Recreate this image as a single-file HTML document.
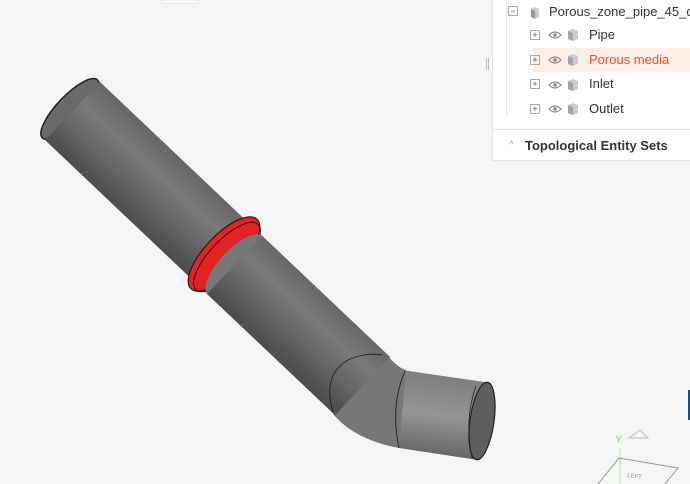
<!DOCTYPE html>
<html><head><style>
html,body{margin:0;padding:0;}
body{width:690px;height:484px;background:#f5f5f5;position:relative;overflow:hidden;font-family:"Liberation Sans",sans-serif;}
.panel{position:absolute;left:492px;top:0;width:198px;height:160px;background:#fff;border-left:1px solid #e4e4e4;border-bottom:1px solid #e4e4e4;}
.row{position:absolute;left:0;height:24px;line-height:24px;font-size:13px;color:#333;width:198px;}
.pm{position:absolute;width:8px;height:8px;border:1px solid #aaa;font-size:9px;line-height:8px;text-align:center;color:#555;top:7px;}
</style></head><body>
<svg width="690" height="484" style="position:absolute;left:0;top:0">
<defs>
<linearGradient id="g1" gradientUnits="userSpaceOnUse" x1="99" y1="82" x2="45" y2="140">
<stop offset="0" stop-color="#666"/><stop offset="0.35" stop-color="#7a7a7a"/><stop offset="1" stop-color="#4e4e4e"/></linearGradient>
<linearGradient id="g2" gradientUnits="userSpaceOnUse" x1="440" y1="375" x2="430" y2="455">
<stop offset="0" stop-color="#7e7e7e"/><stop offset="0.5" stop-color="#959595"/><stop offset="1" stop-color="#666"/></linearGradient>
</defs>
<rect x="162" y="0" width="36" height="3" fill="#fff" stroke="#cde" stroke-width="0.6"/>
<path d="M402,370 L491,383 L478,460 L399,448 Z" fill="url(#g2)"/>
<path d="M388,356 Q398,368 406,370 L399,448 Q355,440 333,414 Z" fill="#777"/>
<ellipse cx="70" cy="109" rx="13" ry="40" transform="rotate(43.5 70 109)" fill="#6a6a6a" stroke="#222" stroke-width="1.5"/>
<path d="M100,82 L390,357 L335,415 L45,140 Z" fill="url(#g1)"/>
<ellipse cx="224" cy="254" rx="19" ry="48" transform="rotate(43.5 224 254)" fill="#e52222" stroke="#111" stroke-width="1"/>
<ellipse cx="227" cy="257" rx="17" ry="45" transform="rotate(43.5 227 257)" fill="none" stroke="#111" stroke-width="0.9"/>
<ellipse cx="235" cy="265" rx="15" ry="40" transform="rotate(43.5 235 265)" fill="#777"/>
<path d="M262,236 L390,357 L335,415 L207,294 Z" fill="url(#g1)"/>
<path d="M333,412 Q322,375 348,360 Q365,352 382,355" fill="none" stroke="#222" stroke-width="0.9"/>
<path d="M405,371 Q390,405 399,448" fill="none" stroke="#222" stroke-width="0.9"/>
<ellipse cx="482" cy="421" rx="12" ry="39" transform="rotate(8 482 421)" fill="#5e5e5e" stroke="#222" stroke-width="1.2"/>
<path d="M476,386 Q464,420 472,458" fill="none" stroke="#222" stroke-width="0.8"/>
<rect x="486" y="58" width="1" height="12" fill="#bbb"/><rect x="488" y="58" width="1" height="12" fill="#bbb"/>
<rect x="688" y="390" width="2" height="30" fill="#1d4f7a"/>
<text x="615" y="443" font-size="11" fill="#7ad67a" font-family="Liberation Sans">Y</text>
<path d="M629,438 L640,430 L648,438 Z" fill="none" stroke="#bbb"/>
<line x1="620" y1="448" x2="620" y2="484" stroke="#bfe8bf" stroke-width="1.5"/>
<path d="M598,484 L619,458 L678,468 L665,484" fill="none" stroke="#999" stroke-width="1"/>
<text x="627" y="477" font-size="6" fill="#999" transform="rotate(8 627 477)">LEFT</text>
</svg>
<div class="panel">
<div style="position:absolute;left:13px;top:0;width:1px;height:115px;background:#e8e8e8"></div>
<div class="row" style="top:0"><span class="pm" style="left:15px;top:6px">−</span><svg style="position:absolute;left:36px;top:6px" width="12" height="13"><path d="M2,3 L6,1 L10,3 L10,11 L6,13 L2,11 Z" fill="#ccc"/><path d="M2,3 L6,5 L6,13 L2,11 Z" fill="#999"/></svg><span style="position:absolute;left:56px">Porous_zone_pipe_45_deg</span></div>
<div class="row" style="top:23px"><span class="pm" style="left:37px">+</span><span style="position:absolute;left:96px">Pipe</span></div>
<div class="row" style="top:48px;background:#fdeee6;left:40px;width:158px"><span style="position:absolute;left:56px;color:#e8531c">Porous media</span></div>
<div class="row" style="top:48px;background:transparent"><span class="pm" style="left:37px">+</span></div>
<div class="row" style="top:72px"><span class="pm" style="left:37px">+</span><span style="position:absolute;left:96px">Inlet</span></div>
<div class="row" style="top:97px"><span class="pm" style="left:37px">+</span><span style="position:absolute;left:96px">Outlet</span></div>
<div style="position:absolute;left:0;top:129px;width:198px;height:1px;background:#e4e4e4"></div>
<div class="row" style="top:134px"><span style="position:absolute;left:16px;color:#aaa;font-size:10px">^</span><span style="position:absolute;left:32px;font-weight:bold;color:#333">Topological Entity Sets</span></div>
</div>
<svg width="690" height="484" style="position:absolute;left:0;top:0;pointer-events:none">
<defs>
<g id="eye"><path d="M0,4 Q6,-2 12,4 Q6,10 0,4 Z" fill="none" stroke="#888" stroke-width="1.2"/><circle cx="6" cy="4" r="1.8" fill="#888"/></g>
<g id="cube"><path d="M0,2 L5,0 L10,2 L10,10 L5,12 L0,10 Z" fill="#ccc"/><path d="M0,2 L5,4 L5,12 L0,10 Z" fill="#a5a5a5"/></g>
</defs>
<g transform="translate(549,31)"><use href="#eye"/></g><g transform="translate(568,29)"><use href="#cube"/></g>
<g transform="translate(549,56)"><use href="#eye"/></g><g transform="translate(568,54)"><use href="#cube"/></g>
<g transform="translate(549,81)"><use href="#eye"/></g><g transform="translate(568,79)"><use href="#cube"/></g>
<g transform="translate(549,105)"><use href="#eye"/></g><g transform="translate(568,103)"><use href="#cube"/></g>
</svg>
</body></html>
